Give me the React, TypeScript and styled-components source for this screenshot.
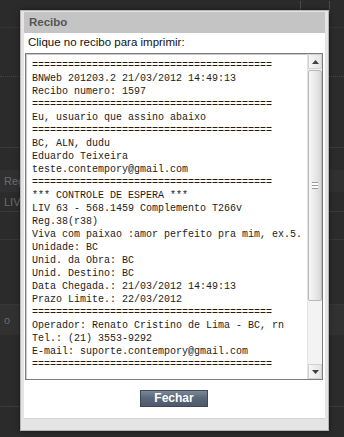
import styled, { createGlobalStyle } from 'styled-components';

const GlobalStyle = createGlobalStyle`
  html, body {
    margin: 0;
    padding: 0;
    background: #2b2b2b;
  }
  * {
    box-sizing: border-box;
  }
`;

const SEP = '========================================';

const receipt = [
  SEP,
  'BNWeb 201203.2 21/03/2012 14:49:13',
  'Recibo numero: 1597',
  SEP,
  'Eu, usuario que assino abaixo',
  SEP,
  'BC, ALN, dudu',
  'Eduardo Teixeira',
  'teste.contempory@gmail.com',
  SEP,
  '*** CONTROLE DE ESPERA ***',
  'LIV 63 - 568.1459 Complemento T266v',
  'Reg.38(r38)',
  'Viva com paixao :amor perfeito pra mim, ex.5.',
  'Unidade: BC',
  'Unid. da Obra: BC',
  'Unid. Destino: BC',
  'Data Chegada.: 21/03/2012 14:49:13',
  'Prazo Limite.: 22/03/2012',
  SEP,
  'Operador: Renato Cristino de Lima - BC, rn',
  'Tel.: (21) 3553-9292',
  'E-mail: suporte.contempory@gmail.com',
  SEP,
  '',
  '',
];

/* Backdrop page (dimmed) */
const Screen = styled.div`
  position: relative;
  width: 344px;
  height: 437px;
  overflow: hidden;
  background: #2b2b2b;
  font-family: 'Liberation Sans', Arial, sans-serif;
`;

const Backdrop = styled.div`
  display: flex;
  flex-direction: column;
  height: 100%;
`;

const BackRow = styled.div<{ h: number; line?: string; shade?: string }>`
  height: ${(p) => p.h}px;
  flex-shrink: 0;
  display: flex;
  align-items: center;
  justify-content: space-between;
  padding: 0 4px;
  background: ${(p) => p.shade || 'transparent'};
  border-bottom: ${(p) => p.line || 'none'};
  color: #6c6c6c;
  font-size: 11px;
`;

const BackIcon = styled.div`
  width: 30px;
  height: 12px;
  margin-top: -14px;
  margin-right: 10px;
  border: 1px solid #4a4a4a;
  border-top: none;
`;

const BackTotal = styled.span`
  margin-left: auto;
  margin-right: 14px;
  font-weight: bold;
  font-size: 10px;
  color: #5c5c5c;
`;

/* Dialog */
const Dialog = styled.div`
  position: absolute;
  left: 20px;
  top: 10px;
  width: 309px;
  height: 421px;
  display: flex;
  flex-direction: column;
  padding: 1px 3px 11px 3px;
  background: #e4e4e4;
  border: 1px solid #b4b4b4;
  box-shadow: 0 0 4px rgba(0, 0, 0, 0.5);
`;

const TitleBar = styled.div`
  height: 21px;
  flex-shrink: 0;
  padding-left: 5px;
  background: #c4c4c4;
  color: #555555;
  font-weight: bold;
  font-size: 11.5px;
  line-height: 21px;
`;

const Content = styled.div`
  flex: 1;
  display: flex;
  flex-direction: column;
  padding: 0 2px 0 1px;
  background: #ffffff;
  border-bottom: 1px solid #d4d4d4;
`;

const Prompt = styled.div`
  height: 20px;
  flex-shrink: 0;
  padding-left: 3px;
  color: #111;
  font-size: 11.5px;
  line-height: 19px;
`;

const ReceiptBox = styled.div`
  height: 327px;
  flex-shrink: 0;
  display: flex;
  border: 1px solid #7d7d7d;
  box-shadow: inset 1px 1px 0 #c9c9c9;
  overflow: hidden;
  cursor: pointer;
`;

const ReceiptText = styled.div`
  flex: 1;
  padding: 5px 0 0 6px;
  font-family: 'Liberation Mono', 'Courier New', monospace;
  font-size: 10px;
  line-height: 13px;
  color: #1c1c1c;
  white-space: pre;
  overflow: hidden;
`;

const Scrollbar = styled.div`
  width: 15px;
  flex-shrink: 0;
  display: flex;
  flex-direction: column;
  background: #f3f3f3;
  border-left: 1px solid #e2e2e2;
`;

const ScrollButton = styled.div`
  height: 15px;
  flex-shrink: 0;
  display: flex;
  align-items: center;
  justify-content: center;
  background: linear-gradient(to right, #f6f6f6, #e4e4e4);
  border: 1px solid #d2d2d2;
`;

const Track = styled.div`
  flex: 1;
  padding: 1px 0;
`;

const Thumb = styled.div`
  height: 231px;
  display: flex;
  align-items: center;
  justify-content: center;
  background: linear-gradient(to right, #f7f7f7, #e6e6e6 60%, #d8d8d8);
  border: 1px solid #b9b9b9;
  border-radius: 2px;
`;

const Grip = styled.div`
  width: 6px;
  height: 7px;
  border-top: 1px solid #9a9a9a;
  border-bottom: 1px solid #9a9a9a;
  background: linear-gradient(#fff 0 2px, #9a9a9a 2px 3px, #fff 3px);
`;

const Footer = styled.div`
  flex: 1;
  display: flex;
  align-items: center;
  justify-content: center;
  padding-bottom: 1px;
`;

const Button = styled.button`
  width: 68px;
  height: 17px;
  padding: 0;
  border: 1px solid #3e4957;
  background: linear-gradient(#7a8898, #5a6879 45%, #4d5a6a);
  color: #ffffff;
  font-family: 'Liberation Sans', Arial, sans-serif;
  font-weight: bold;
  font-size: 12px;
  line-height: 15px;
  cursor: pointer;
`;

const Arrow = ({ down }: { down?: boolean }) => (
  <svg width="7" height="4" viewBox="0 0 7 4">
    <path d={down ? 'M0 0H7L3.5 4Z' : 'M0 4H7L3.5 0Z'} fill="#404040" />
  </svg>
);

export default function App() {
  return (
    <>
      <GlobalStyle />
      <Screen>
        <Backdrop>
          <BackRow h={28} line="1px solid #353535">
            <span />
            <BackIcon />
          </BackRow>
          <BackRow h={49} line="1px dotted #444" />
          <BackRow h={71} line="1px solid #393939" />
          <BackRow h={22} />
          <BackRow h={22} shade="#303030">
            Regi
          </BackRow>
          <BackRow h={20} line="1px solid #3a3a3a">
            LIV-
          </BackRow>
          <BackRow h={28} line="1px solid #373737" />
          <BackRow h={65} line="1px solid #373737" />
          <BackRow h={30} shade="#313131">
            o
          </BackRow>
          <BackRow h={72} line="1px solid #3a3a3a" />
          <BackRow h={30}>
            <BackTotal>TOTAL: 0</BackTotal>
          </BackRow>
        </Backdrop>

        <Dialog>
          <TitleBar>Recibo</TitleBar>
          <Content>
            <Prompt>Clique no recibo para imprimir:</Prompt>
            <ReceiptBox>
              <ReceiptText>{receipt.join('\n')}</ReceiptText>
              <Scrollbar>
                <ScrollButton>
                  <Arrow />
                </ScrollButton>
                <Track>
                  <Thumb>
                    <Grip />
                  </Thumb>
                </Track>
                <ScrollButton>
                  <Arrow down />
                </ScrollButton>
              </Scrollbar>
            </ReceiptBox>
            <Footer>
              <Button>Fechar</Button>
            </Footer>
          </Content>
        </Dialog>
      </Screen>
    </>
  );
}
